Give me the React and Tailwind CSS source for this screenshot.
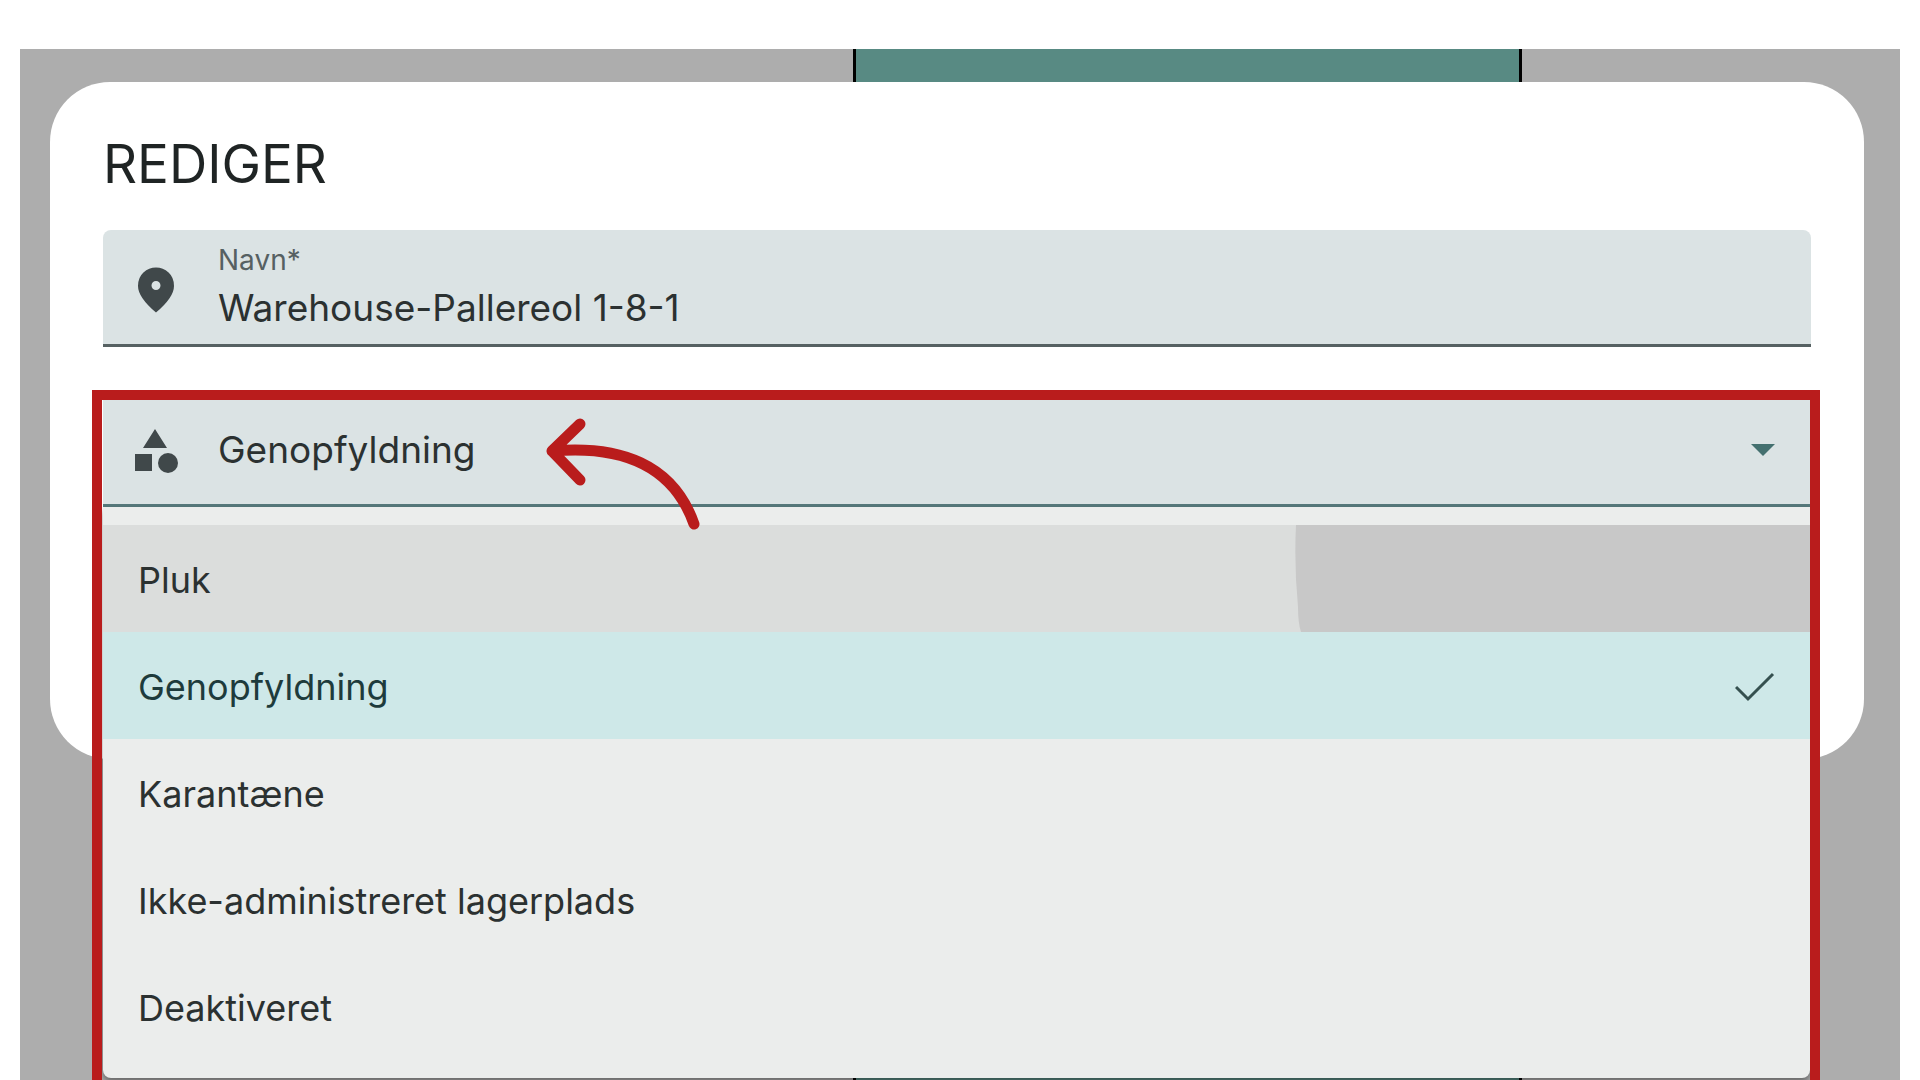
import { useState } from 'react';

const fieldClass = 'flex items-center border-b-3 bg-[#dbe3e4] pl-[26px]';

const locationTypes = [
  'Pluk',
  'Genopfyldning',
  'Karantæne',
  'Ikke-administreret lagerplads',
  'Deaktiveret',
];

function PinIcon() {
  return (
    <svg viewBox="0 0 24 24" className="size-[54px] shrink-0 fill-[#40484a]" aria-hidden="true">
      <path d="M12 12q.825 0 1.413-.588T14 10t-.588-1.413T12 8t-1.413.588T10 10t.588 1.413T12 12m0 10q-4.025-3.425-6.012-6.362T4 10.2q0-3.75 2.413-5.975T12 2t5.588 2.225T20 10.2q0 2.5-1.987 5.438T12 22" />
    </svg>
  );
}

function ShapesIcon() {
  return (
    <svg viewBox="0 0 54 54" className="size-[54px] shrink-0 fill-[#40484a]" aria-hidden="true">
      <path d="M26 6 L38 25 H14 Z M6 31 H23 V48 H6 Z" />
      <circle cx="39" cy="40" r="10" />
    </svg>
  );
}

function CheckIcon() {
  return (
    <svg viewBox="0 0 40 30" className="h-[30px] w-10 fill-none stroke-[#35504f] stroke-3" aria-hidden="true">
      <path d="M1 15 L13 27 L38 2" />
    </svg>
  );
}

function Arrow() {
  return (
    <svg
      viewBox="0 0 160 120"
      className="pointer-events-none absolute top-[10px] left-[440px] h-[120px] w-[160px] fill-none stroke-[#b91c1c] stroke-11"
      strokeLinecap="round"
      strokeLinejoin="round"
      aria-hidden="true"
    >
      <path d="M38 14 L10 41 L38 70 M10 41 C78 35 131 54 152 114" />
    </svg>
  );
}

function TypeMenu({ selected, onSelect }) {
  return (
    <ul role="listbox" aria-label="Type" className="rounded-b-lg bg-[#ebedec] py-[18px] shadow-[0_4px_6px_rgba(0,0,0,0.4)]">
      {locationTypes.map((type, index) => (
        <li key={type} role="option" aria-selected={type === selected}>
          <button
            type="button"
            onClick={() => onSelect(type)}
            className={`relative flex h-[107px] w-full items-center justify-between overflow-hidden px-[35px] pt-[2px] text-left ${
              type === selected ? 'bg-[#cee8e8] text-[#1e3b3c]' : index === 0 ? 'bg-[#dbdddc]' : ''
            }`}
          >
            {index === 0 && (
              <svg viewBox="0 0 515 107" preserveAspectRatio="none" className="absolute inset-y-0 right-0 h-full w-[515px] fill-[#c8c8c8]" aria-hidden="true">
                <path d="M1 0 H515 V107 H6 Q3 98 3 82 Q-1 40 1 0 Z" />
              </svg>
            )}
            <span>{type}</span>
            {type === selected && <CheckIcon />}
          </button>
        </li>
      ))}
    </ul>
  );
}

export default function App() {
  const [name, setName] = useState('Warehouse-Pallereol 1-8-1');
  const [type, setType] = useState('Genopfyldning');

  return (
    <div className="h-screen overflow-hidden bg-white px-5 pt-[49px] font-[Inter,sans-serif] text-4xl text-[#2b3131]">
      <div className="relative h-full bg-[#adadad] pr-9 pl-[30px] pt-[33px]">
        <div className="absolute inset-y-0 left-[833px] w-[669px] border-x-3 border-black bg-[#588a83]" />

        <main className="relative h-[677px] rounded-[60px] bg-white px-[53px] pt-[46px]">
          <h1 className="mb-[30px] text-[53px] leading-[72px] text-[#1f2424]">REDIGER</h1>

          <div className={`${fieldClass} h-[117px] rounded-t-lg border-[#566162] pt-[5px]`}>
            <PinIcon />
            <div className="ml-[35px] flex grow flex-col">
              <label htmlFor="name" className="text-[28px] leading-9 text-[#566062]">Navn*</label>
              <input
                id="name"
                value={name}
                onChange={(event) => setName(event.target.value)}
                className="h-15 w-full bg-transparent text-[37px] outline-none"
              />
            </div>
          </div>

          <section className="relative mt-[43px] mr-[-9px] ml-[-11px] h-[800px] overflow-hidden border-10 border-[#b91c1c] pl-px">
            <div className={`${fieldClass} h-[107px] border-[#56797b] pb-[4px]`}>
              <ShapesIcon />
              <button type="button" aria-haspopup="listbox" aria-expanded="true" className="ml-[35px] flex grow items-center justify-between pr-[35px] text-left text-[37px]">
                {type}
                <svg viewBox="0 0 24 12" className="h-3 w-6 fill-[#44706f]" aria-hidden="true">
                  <path d="M0 0 H24 L12 12 Z" />
                </svg>
              </button>
            </div>
            <TypeMenu selected={type} onSelect={setType} />
            <Arrow />
          </section>
        </main>
      </div>
    </div>
  );
}
